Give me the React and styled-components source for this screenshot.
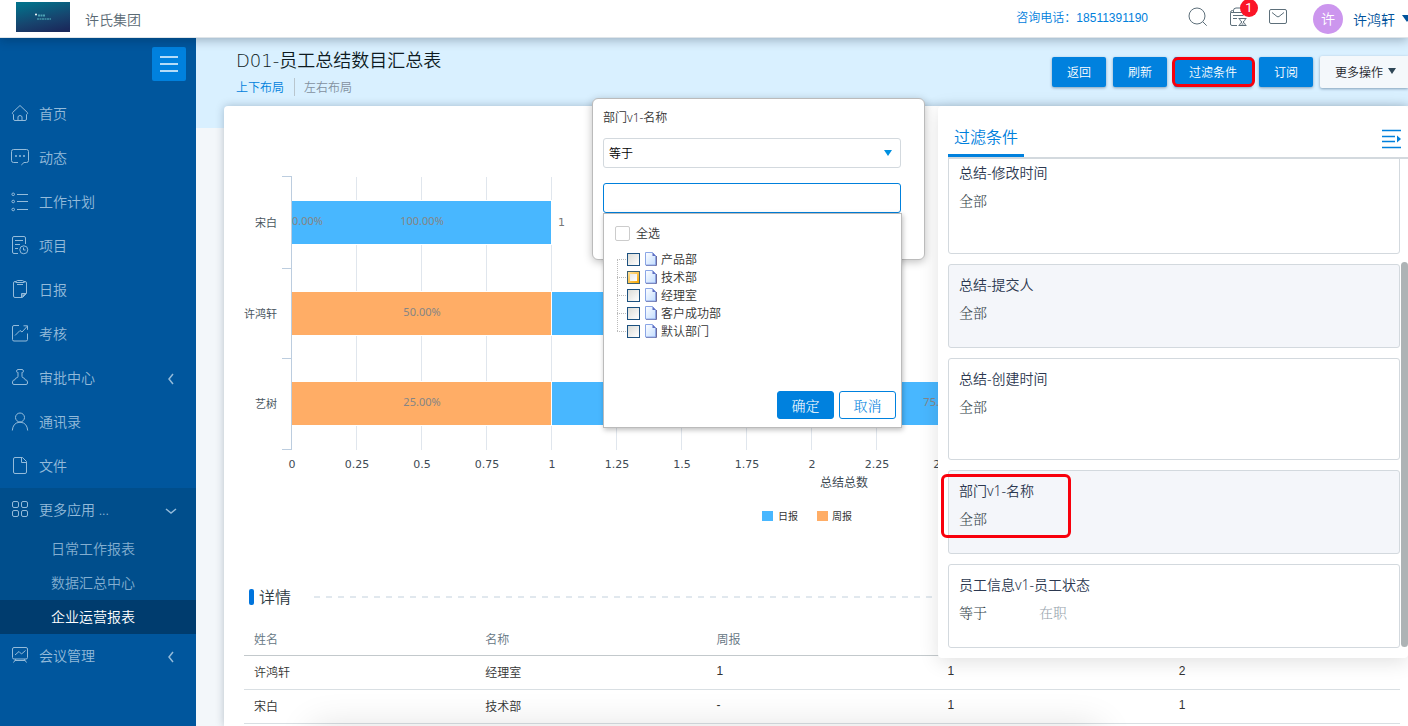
import React, { useState } from 'react';
import styled, { createGlobalStyle } from 'styled-components';

const GlobalStyle = createGlobalStyle`
  * {
    box-sizing: border-box;
  }
  body {
    margin: 0;
    overflow: hidden;
    font-family: "Noto Sans", "Noto Sans CJK SC", sans-serif;
    font-size: 12px;
    font-weight: 350;
    color: #333;
  }
  button, input, select {
    font-family: inherit;
    font-weight: inherit;
    margin: 0;
  }
  a {
    text-decoration: none;
    color: inherit;
  }
`;

const SERIF = '"Noto Serif CJK SC", "Liberation Serif", "Noto Sans CJK SC", serif';

const Shell = styled.div`
  display: flex;
  flex-direction: column;
  height: 100vh;
  overflow: hidden;
`;

/* ---------- top bar ---------- */

const TopBar = styled.header`
  position: relative;
  z-index: 5;
  flex: none;
  display: flex;
  align-items: center;
  height: 38px;
  padding-left: 16px;
  background: #fff;
  border-bottom: 1px solid #dfe5e9;
  box-shadow: 0 2px 10px rgba(0, 20, 40, 0.3);
`;

const Logo = styled.svg`
  width: 54px;
  height: 30px;
  margin-bottom: 4px;
`;

const Company = styled.span`
  margin-left: 15px;
  font-size: 14px;
  color: #5b6a74;
`;

const Tools = styled.div`
  display: flex;
  align-items: center;
  gap: 22px;
  margin-left: auto;
  padding-bottom: 4px;
  color: #5d6f7a;
`;

const Phone = styled.span`
  margin-right: 19px;
  font-family: "Liberation Sans", "Noto Sans CJK SC", sans-serif;
  font-size: 12px;
  color: #0080dc;
`;

const IconButton = styled.button`
  position: relative;
  display: flex;
  width: 18px;
  height: 18px;
  padding: 0;
  border: 0;
  background: none;
  color: inherit;
  cursor: pointer;

  svg {
    overflow: visible;
  }
`;

const Badge = styled.span`
  position: absolute;
  top: -9px;
  left: 11px;
  width: 18px;
  height: 18px;
  border-radius: 9px;
  background: #fb1528;
  color: #fff;
  font-family: Roboto, sans-serif;
  font-size: 13px;
  font-weight: 400;
  line-height: 17px;
  text-align: center;
`;

const User = styled.div`
  display: flex;
  align-items: center;
  margin-left: 26px;
  font-size: 14px;
  color: #00529b;

  svg {
    margin-left: 7px;
  }
`;

const Avatar = styled.span`
  width: 30px;
  height: 30px;
  margin-right: 10px;
  border-radius: 50%;
  background: #cc96ee;
  color: #fff;
  line-height: 30px;
  text-align: center;
`;

/* ---------- sidebar ---------- */

const Body = styled.div`
  flex: 1;
  display: flex;
  min-height: 0;
`;

const Sidebar = styled.nav`
  flex: none;
  width: 196px;
  background: #00569d;
  font-size: 14px;
  color: #94bbda;
`;

const ToggleRow = styled.div`
  display: flex;
  justify-content: flex-end;
  padding: 9px 10px 11px;
`;

const Toggle = styled.button`
  display: flex;
  align-items: center;
  justify-content: center;
  width: 34px;
  height: 34px;
  padding: 0;
  border: 0;
  border-radius: 2px;
  background: #0081de;
  color: #b4dcf8;
`;

const NavGroup = styled.div`
  background: ${({ $open }) => ($open ? '#004e8c' : 'transparent')};
`;

const NavItem = styled.a`
  display: flex;
  align-items: center;
  gap: 10px;
  height: 44px;
  padding: 0 19px 0 11px;

  span {
    padding-bottom: 2px;
  }
  svg {
    flex: none;
    overflow: visible;
  }
`;

const Chevron = styled.svg`
  width: 12px;
  height: 12px;
  margin: 2px 0 0 auto;
`;

const SubItem = styled.a`
  display: block;
  padding-left: 51px;
  line-height: 34px;
  color: ${({ $active }) => ($active ? '#fff' : '#83aed0')};
  background: ${({ $active }) => ($active ? '#003c6e' : 'transparent')};
`;

/* ---------- page ---------- */

const Page = styled.main`
  position: relative;
  flex: 1;
  display: flex;
  flex-direction: column;
  min-width: 0;
  background: linear-gradient(#d9f0ff 90px, #f3f7fa 90px);
`;

const PageHead = styled.div`
  flex: none;
  display: flex;
  justify-content: space-between;
  padding: 9px 0 7px 40px;
`;

const Title = styled.h1`
  margin: 0;
  font-family: "DejaVu Sans", "Noto Sans CJK SC", sans-serif;
  font-size: 18px;
  font-weight: 350;
  line-height: 28px;
  color: #0d1a22;
`;

const LayoutTabs = styled.div`
  display: flex;
  align-items: center;
  height: 24px;
`;

const LayoutTab = styled.a`
  color: ${({ $active }) => ($active ? '#0080dc' : '#8391a0')};

  & + & {
    margin-left: 10px;
    padding-left: 9px;
    border-left: 1px solid #b9c6ce;
  }
`;

const Actions = styled.div`
  display: flex;
  align-items: center;
  gap: 7px;
  height: 32px;
  margin-top: 9px;
`;

const ActionButton = styled.button`
  position: relative;
  height: 30px;
  padding: 0 15px;
  border: 0;
  border-radius: 2px;
  background: #0081de;
  box-shadow: 0 1px 3px rgba(0, 40, 80, 0.4);
  color: #fff;
  font-size: 12px;
`;

const MoreButton = styled(ActionButton)`
  display: flex;
  align-items: center;
  gap: 5px;
  width: 88px;
  height: 32px;
  border-radius: 2px 0 0 2px;
  background: #f4f8fb;
  color: #1c262c;
  white-space: nowrap;

  svg {
    flex: none;
    margin-bottom: 2px;
  }
`;

const Mark = styled.span`
  position: absolute;
  border: 3px solid #f8000c;
  border-radius: 6px;
  pointer-events: none;
`;

const ButtonMark = styled(Mark)`
  inset: 0 -3px 0 -2px;
`;

const CardMark = styled(Mark)`
  top: 3px;
  left: -8px;
  width: 130px;
  height: 64px;
`;

const Report = styled.section`
  position: relative;
  flex: 1;
  min-height: 0;
  margin-left: 28px;
  padding: 0 8px 0 20px;
  overflow: hidden;
  border-radius: 4px 0 0 0;
  background: #fff;
  box-shadow: 0 0 8px rgba(0, 30, 60, 0.25);

  &::after {
    content: "";
    position: absolute;
    right: 308px;
    bottom: -40px;
    left: 88px;
    height: 40px;
    box-shadow: 0 0 36px rgba(0, 0, 0, 0.12);
  }
`;

const ChartBox = styled.svg`
  display: block;
  width: 100%;
  height: 464px;
  font-weight: 400;
`;

const SectionHead = styled.div`
  display: flex;
  align-items: center;
  height: 54px;
  padding-left: 5px;
`;

const SectionTitle = styled.h2`
  display: flex;
  gap: 5px;
  margin: 0 23px 0 0;
  font-size: 16px;
  font-weight: 350;
  line-height: 16px;
  color: #2e3a42;

  &::before {
    content: "";
    width: 5px;
    border-radius: 2px;
    background: #0074dc;
  }
`;

const Dashes = styled.div`
  flex: 1;
  height: 2px;
  background: repeating-linear-gradient(90deg, #e1e8ee 0 6px, transparent 6px 12px);
`;

const Table = styled.table`
  width: 100%;
  table-layout: fixed;
  border-collapse: collapse;
  font-family: "Liberation Sans", "Noto Sans CJK SC", sans-serif;
  text-align: left;

  th, td {
    height: 34px;
    padding: 0 10px 2px;
    border-bottom: 1px solid #d9dfe3;
    font-weight: 350;
  }
  th {
    height: 31px;
    border-bottom-color: #c3c9cc;
    color: #63747f;
  }
`;

/* ---------- filter panel ---------- */

const Panel = styled.aside`
  position: absolute;
  top: 68px;
  right: 0;
  width: 470px;
  padding-bottom: 10px;
  border-radius: 4px;
  background: #fff;
  box-shadow: 0 4px 20px rgba(0, 0, 0, 0.12);
`;

const PanelHead = styled.div`
  display: flex;
  align-items: flex-end;
  justify-content: space-between;
  height: 53px;
  margin-left: 10px;
  padding-right: 7px;
  border-bottom: 2px solid #d3d9de;
  color: #0080dc;
`;

const PanelTitle = styled.h2`
  margin: 0;
  padding: 0 6px;
  border-bottom: 3px solid #0081de;
  font-size: 16px;
  font-weight: 350;
  line-height: 34px;
`;

const CollapseButton = styled.button`
  padding: 0;
  margin-bottom: 8px;
  border: 0;
  background: none;
  color: inherit;
  line-height: 0;
`;

// anchored to its end, as scrolled to the last condition
const FilterList = styled.div`
  position: relative;
  display: flex;
  flex-direction: column;
  justify-content: flex-end;
  gap: 10px;
  height: 489px;
  padding: 0 8px 0 10px;
  overflow: hidden;
`;

const ScrollThumb = styled.span`
  position: absolute;
  right: 0;
  bottom: 1px;
  width: 7px;
  height: 385px;
  border-radius: 4px;
  background: #adb3b5;
`;

const FilterCard = styled.div`
  position: relative;
  flex: none;
  height: ${({ $tall }) => ($tall ? '102px' : '84px')};
  padding: 10px;
  border: 1px solid #d3d9de;
  border-radius: 3px;
  background: ${({ $shaded }) => ($shaded ? '#f4f6fa' : '#fff')};
`;

const FilterName = styled.h3`
  margin: 0 0 7px;
  font-size: 14px;
  font-weight: 350;
  line-height: 20px;
  color: #2c3850;
`;

const FilterValue = styled.div`
  display: grid;
  grid-template-columns: 80px 1fr;
  font-family: ${SERIF};
  font-size: 14px;
  line-height: 20px;
  color: #333f48;

  em {
    font-style: normal;
    color: #97a4ad;
  }
`;

/* ---------- filter popup ---------- */

const Popup = styled.div`
  position: absolute;
  top: 60px;
  right: 483px;
  width: 333px;
  height: 162px;
  padding: 9px 23px 0 10px;
  border: 1px solid #bbb;
  border-radius: 6px;
  background: #fff;
  box-shadow: 0 2px 8px rgba(0, 0, 0, 0.25);
`;

const PopupTitle = styled.div`
  line-height: 20px;
  margin-bottom: 10px;
`;

const SelectBox = styled.div`
  position: relative;
  margin-bottom: 15px;

  svg {
    position: absolute;
    top: 12px;
    right: 9px;
    pointer-events: none;
  }
`;

const Select = styled.select`
  display: block;
  width: 100%;
  height: 30px;
  padding: 0 5px;
  border: 1px solid #d3d9de;
  border-radius: 3px;
  background: #fff;
  color: #000;
  font-size: 12px;
  appearance: none;
`;

const Field = styled.input`
  display: block;
  width: 100%;
  height: 30px;
  padding: 0 5px;
  border: 1px solid #0080dc;
  border-radius: 3px;
  font-size: 12px;
  outline: none;
`;

const DropDown = styled.div`
  display: flex;
  flex-direction: column;
  width: 299px;
  height: 215px;
  padding: 10px 5px 8px 11px;
  border: 1px solid #bbb;
  background: #fff;
  box-shadow: 1px 2px 5px rgba(0, 0, 0, 0.25);
`;

const AllLabel = styled.label`
  display: flex;
  align-items: center;
  gap: 6px;
  height: 18px;

  input {
    width: 15px;
    height: 15px;
    border: 1px solid #ccc;
    border-radius: 2px;
    appearance: none;
  }
`;

const Tree = styled.ul`
  margin: 8px 0 0 2px;
  padding: 0;
  list-style: none;
`;

const Node = styled.li`
  height: 18px;
  background:
    linear-gradient(90deg, #bbb 1px, transparent 1px) 0 9px / 2px 1px repeat-x,
    linear-gradient(#bbb 1px, transparent 1px) 0 0 / 1px 2px repeat-y;

  &:first-child {
    background:
      linear-gradient(90deg, #bbb 1px, transparent 1px) 0 9px / 2px 1px repeat-x,
      linear-gradient(#fff, #fff) 0 0 / 1px 9px no-repeat,
      linear-gradient(#bbb 1px, transparent 1px) 0 0 / 1px 2px repeat-y;
  }
  &:last-child {
    background:
      linear-gradient(90deg, #bbb 1px, transparent 1px) 0 9px / 2px 1px repeat-x,
      linear-gradient(#fff, #fff) 0 10px / 1px 9px no-repeat,
      linear-gradient(#bbb 1px, transparent 1px) 0 0 / 1px 2px repeat-y;
  }

  label {
    display: flex;
    align-items: center;
    height: 18px;
    margin-left: 10px;
    background: #fff;
    line-height: 16px;
  }
  span {
    padding-top: 2px;
  }
  svg {
    margin: 0 4px 0 5px;
  }
`;

const NodeCheck = styled.input`
  width: 13px;
  height: 13px;
  border: 1px solid ${({ $hot }) => ($hot ? '#3d5f70' : '#1c5180')};
  appearance: none;
  background: ${({ $hot }) =>
    $hot
      ? 'linear-gradient(135deg, #e8e8e6, #fff) 2px 2px / 7px 7px no-repeat, linear-gradient(135deg, #ffe3a0, #f9a600)'
      : 'linear-gradient(135deg, #dcdcd7, #fff)'};
`;

const Buttons = styled.div`
  display: flex;
  justify-content: flex-end;
  gap: 5px;
  margin-top: auto;
`;

const PopupButton = styled.button`
  width: 57px;
  height: 28px;
  padding: 0;
  border: 1px solid #0081de;
  border-radius: 3px;
  background: ${({ $primary }) => ($primary ? '#0081de' : '#fff')};
  color: ${({ $primary }) => ($primary ? '#fff' : '#0081de')};
  font-family: ${SERIF};
  font-size: 14px;
`;

/* ---------- drawings ---------- */

const iconPaths = {
  home: (
    <path d="M9 .5 1.6 7.5q-1 1 .9 2v4.5q0 1.500 1.500 1.500h10q1.500 0 1.500-1.500V9.500q1.900-1 .9-2zM7 15.500v-4q2-2.200 4 0v4" />
  ),
  chat: (
    <>
      <path d="M7 13.5H2.5q-2 0-2-2v-9q0-2 2-2h13q2 0 2 2v9q0 2-2 2H13L10.3 16" />
      <path d="M4 7h2M8 7h2M12 7h2" strokeWidth="1.6" />
    </>
  ),
  list: (
    <>
      <circle cx="2.2" cy="1.3" r="1.3" />
      <circle cx="2.2" cy="8.5" r="1.3" />
      <circle cx="2.2" cy="16.5" r="1.3" />
      <path d="M6 1.5h11M6 8.5h11M6 16.5h11" />
    </>
  ),
  project: (
    <>
      <path d="M7 16.5H3Q1.5 16.5 1.5 15V1Q1.5-.5 3-.5h10q1.5 0 1.5 1.5v6M4 3.5h8M4 7.5h5M4 11.5h3" />
      <circle cx="12.8" cy="12.8" r="4" />
      <path d="M12.5 10.5V13h2" />
    </>
  ),
  daily: (
    <>
      <path d="M5 .5H4Q2.5.5 2.5 2v13q0 1.5 1.5 1.5h7.5l4-4V2q0-1.5-1.5-1.5h-1M5.500 1.500v-1Q5.500-.5 6.500-.5h5q1 0 1 1v1M4.5 1.500h9M6 3.500h6" />
      <path d="M10.500 16v-3.500H15z" fill="currentColor" fillOpacity=".5" />
    </>
  ),
  assess: (
    <path d="M8 .5H3Q1.5.5 1.5 2v12.5Q1.5 16 3 16h12q1.5 0 1.5-1.5v-6M4 10.500l5-5 2 1.500 5.500-6M12.500.8h4v4" />
  ),
  stamp: (
    <path d="M5.500 2.500Q5.500.5 7 .5h4q1.500 0 1.500 2 0 .8-1 .8h-.5v4q0 1.200 1 1.400 2 .3 2 2 2.500.2 2.500 2.300v1q0 1.500-1.500 1.500H3Q1.500 15.500 1.500 14v-1q0-2.100 2.500-2.300 0-1.700 2-2 1-.2 1-1.400v-4h-.5q-1 0-1-.8z" />
  ),
  person: (
    <>
      <circle cx="9" cy="4.500" r="4.500" />
      <path d="M1.300 17.500Q2 10 8 9.300h2q6 .7 6.700 8.200" />
    </>
  ),
  file: (
    <path d="M11.500.5H4Q2.500.5 2.500 2v13q0 1.500 1.500 1.500h10q1.500 0 1.500-1.500V4.500zM10.500 1v4.500H15" />
  ),
  grid: (
    <>
      <rect x="1.500" y=".5" width="6" height="6" rx="1.500" />
      <rect x="10.500" y=".5" width="6" height="6" rx="1.500" />
      <rect x="1.500" y="9.500" width="6" height="6" rx="1.500" />
      <rect x="10.500" y="9.500" width="6" height="6" rx="1.500" />
    </>
  ),
  board: (
    <path d="M3 .5h12q1.500 0 1.500 1.500v8.500q0 1.500-1.500 1.500H3q-1.500 0-1.500-1.500V2Q1.500.5 3 .5zM4 8l4-3.500 2.500 2.500L14.500 3.500M5 12l-2.500 3.500M13 12l2.500 3.500M4 13.500h10" />
  ),
  search: (
    <>
      <circle cx="8" cy="8" r="8" />
      <path d="m13.700 13.700 4 4" />
    </>
  ),
  tasks: (
    <path d="M4.500 4V2.500Q4.500 0 7 0h7Q16.500 0 16.500 2M4.500 2.500H3.500Q1.500 2.500 1.500 4.500V16q0 1.500 1.500 1.500h5M2 4.500h12.500q2 0 2 2v1.500M4 7.500h10.500M4 10.500h4M9.500 10.500h8M9.500 17.500h8M10.500 10.500q0 2 2.500 3.500-2.500 1.500-2.500 3.500M16.500 10.500q0 2-2.500 3.500 2.500 1.500 2.500 3.500M12.500 16h2" />
  ),
  mail: (
    <path d="M2 1.500h14q1.500 0 1.500 1.500v11q0 1.500-1.500 1.500H2Q.5 15.500.5 14V3Q.5 1.500 2 1.500zM3 4.500l5 4q1 .7 2 0l5-4" />
  ),
  burger: <path d="M0 2h18M0 9h18M0 16h18" strokeWidth="2" />,
};

const Icon = ({ name }) => (
  <svg width="18" height="18" viewBox="0 0 18 18" fill="none" stroke="currentColor" strokeLinejoin="round">
    {iconPaths[name]}
  </svg>
);

const nav = [
  { icon: 'home', label: '首页' },
  { icon: 'chat', label: '动态' },
  { icon: 'list', label: '工作计划' },
  { icon: 'project', label: '项目' },
  { icon: 'daily', label: '日报' },
  { icon: 'assess', label: '考核' },
  { icon: 'stamp', label: '审批中心', more: true },
  { icon: 'person', label: '通讯录' },
  { icon: 'file', label: '文件' },
  {
    icon: 'grid',
    label: '更多应用 ...',
    more: true,
    items: ['日常工作报表', '数据汇总中心', '企业运营报表'],
  },
  { icon: 'board', label: '会议管理', more: true },
];

const BLUE = '#48b7ff';
const ORANGE = '#ffad66';

const people = [
  { name: '宋白', parts: [{ value: 1, color: BLUE, text: '100.00%' }], zero: '0.00%', total: 1 },
  {
    name: '许鸿轩',
    parts: [
      { value: 1, color: ORANGE, text: '50.00%' },
      { value: 1, color: BLUE },
    ],
  },
  {
    name: '艺树',
    parts: [
      { value: 1, color: ORANGE, text: '25.00%' },
      { value: 3, color: BLUE, text: '75.00%' },
    ],
  },
];

const filters = [
  { name: '总结-修改时间', value: '全部', tall: true },
  { name: '总结-提交人', value: '全部', shaded: true },
  { name: '总结-创建时间', value: '全部', tall: true },
  { name: '部门v1-名称', value: '全部', shaded: true, marked: true },
  { name: '员工信息v1-员工状态', value: '等于', extra: '在职' },
];

const rows = [
  ['许鸿轩', '经理室', '1', '1', '2'],
  ['宋白', '技术部', '-', '1', '1'],
];

const departments = ['产品部', '技术部', '经理室', '客户成功部', '默认部门'];

const Chart = () => {
  const left = 48;
  const top = 71;
  const unit = 260;
  const band = 90.6;
  const ticks = Array.from({ length: 11 }, (_, i) => i / 4);

  return (
    <ChartBox role="img" aria-label="总结总数" fontFamily='"DejaVu Sans", "Noto Sans CJK SC", sans-serif'>
      {ticks.map((t) => (
        <g key={t}>
          {t > 0 && <path d={`M${Math.round(left + t * unit) - 0.5} ${top}v273`} stroke="#e0e6ed" />}
          <text x={left + t * unit} y="362" textAnchor="middle" fontSize="11" fill="#3e4a54">{t}</text>
        </g>
      ))}
      <path
        d="M38 70.5h9.500M38 162.500h9.500M38 252.500h9.500M38 343.500h9.500M47.500 70v274"
        stroke="#bccddf"
        fill="none"
      />
      {people.map((p, row) => {
        const y = top + Math.round(row * band) + 24;
        let x = left;
        return (
          <g key={p.name}>
            <text x="33" y={y + 26} textAnchor="end" fontSize="11" fill="#4a5660">{p.name}</text>
            {p.parts.map((part, i) => {
              const w = part.value * unit;
              const start = x;
              x += w;
              return (
                <g key={i}>
                  <rect x={start} y={y - 1} width={w} height="45" fill="#fff" />
                  <rect x={start} y={y} width={w - 1} height="43" fill={part.color} />
                  {part.text && (
                    <text
                      x={start + w / 2}
                      y={y + 24}
                      textAnchor="middle"
                      fontSize="11"
                      fill="#858585"
                      fontFamily='"Noto Sans", sans-serif'
                    >
                      {part.text}
                    </text>
                  )}
                </g>
              );
            })}
            {p.zero && (
              <text x={left} y={y + 24} fontSize="11" fill="#858585" fontFamily='"Noto Sans", sans-serif'>
                {p.zero}
              </text>
            )}
            {p.total && <text x={x + 6} y={y + 25} fontSize="11" fill="#777">{p.total}</text>}
          </g>
        );
      })}
      <text x="600" y="381" textAnchor="middle" fontSize="12" fill="#3e4a54">总结总数</text>
      <g fontSize="10" fill="#333">
        <rect x="518" y="405" width="11" height="10" fill={BLUE} />
        <text x="534" y="414">日报</text>
        <rect x="573" y="405" width="11" height="10" fill={ORANGE} />
        <text x="588" y="414">周报</text>
      </g>
    </ChartBox>
  );
};

const DocIcon = () => (
  <svg width="12" height="14" viewBox="0 0 12 14">
    <defs>
      <linearGradient id="sheet" x1="0" y1="0" x2="1" y2="1">
        <stop offset="0" stopColor="#fff" />
        <stop offset="1" stopColor="#c3ddff" />
      </linearGradient>
    </defs>
    <path d="M1 13.500h10.500V4" stroke="#6b6b9c" fill="none" />
    <path d="M.5.5H7.500L10.500 4v9H.5z" fill="url(#sheet)" stroke="#8ba6e6" />
    <path d="M7.500.5V4H11z" fill="#5f6fc4" />
  </svg>
);

const Caret = ({ color = '#0090e0' }) => (
  <svg width="8" height="6" viewBox="0 0 8 6" aria-hidden="true">
    <path d="M0 0h8L4 6z" fill={color} />
  </svg>
);

const FilterPopup = () => {
  const [keyword, setKeyword] = useState('');

  return (
    <Popup>
      <PopupTitle>部门v1-名称</PopupTitle>
      <SelectBox>
        <Select aria-label="条件" defaultValue="等于">
          <option>等于</option>
        </Select>
        <Caret />
      </SelectBox>
      <Field aria-label="部门" value={keyword} onChange={(e) => setKeyword(e.target.value)} />
      <DropDown>
        <AllLabel>
          <input type="checkbox" />
          全选
        </AllLabel>
        <Tree>
          {departments.map((name, i) => (
            <Node key={name}>
              <label>
                <NodeCheck type="checkbox" $hot={i === 1} />
                <DocIcon />
                <span>{name}</span>
              </label>
            </Node>
          ))}
        </Tree>
        <Buttons>
          <PopupButton $primary>确定</PopupButton>
          <PopupButton>取消</PopupButton>
        </Buttons>
      </DropDown>
    </Popup>
  );
};

const FilterPanel = () => (
  <Panel>
    <PanelHead>
      <PanelTitle>过滤条件</PanelTitle>
      <CollapseButton aria-label="收起">
        <svg width="19" height="20" viewBox="0 0 19 20" fill="none" stroke="currentColor" strokeWidth="1.500">
          <path d="M0 1.500h19M0 7.500h13M0 12.500h13M0 18.500h19" />
          <path d="M15 6.500v7l4-3.500z" fill="currentColor" stroke="none" />
        </svg>
      </CollapseButton>
    </PanelHead>
    <FilterList>
      {filters.map((f) => (
        <FilterCard key={f.name} $tall={f.tall} $shaded={f.shaded}>
          <FilterName>{f.name}</FilterName>
          <FilterValue>
            <span>{f.value}</span>
            {f.extra && <em>{f.extra}</em>}
          </FilterValue>
          {f.marked && <CardMark />}
        </FilterCard>
      ))}
      <ScrollThumb />
    </FilterList>
  </Panel>
);

export default function App() {
  return (
    <Shell>
      <GlobalStyle />
      <TopBar>
        <Logo viewBox="0 0 54 30">
          <defs>
            <linearGradient id="logo" x1="0.300" y1="0" x2="0.700" y2="1">
              <stop offset="0" stopColor="#03708a" />
              <stop offset="0.600" stopColor="#17446e" />
              <stop offset="1" stopColor="#1a2a5c" />
            </linearGradient>
          </defs>
          <rect width="54" height="30" fill="url(#logo)" />
          <circle cx="20" cy="12.500" r="1" fill="#fff" />
          <path d="M22 13.500h7" stroke="#5cb8c4" strokeWidth="2" strokeDasharray="2 .5" opacity=".8" />
          <path d="M21 17h14" stroke="#3f8fa4" strokeWidth="2" strokeDasharray="2 .5" opacity=".8" />
        </Logo>
        <Company>许氏集团</Company>
        <Tools>
          <Phone>咨询电话：18511391190</Phone>
          <IconButton aria-label="搜索"><Icon name="search" /></IconButton>
          <IconButton aria-label="任务">
            <Icon name="tasks" />
            <Badge>1</Badge>
          </IconButton>
          <IconButton aria-label="邮件"><Icon name="mail" /></IconButton>
        </Tools>
        <User>
          <Avatar>许</Avatar>
          许鸿轩
          <svg width="6" height="7" viewBox="0 0 6 7">
            <path d="M0 0h10L5 7z" fill="currentColor" />
          </svg>
        </User>
      </TopBar>
      <Body>
        <Sidebar>
          <ToggleRow>
            <Toggle aria-label="菜单"><Icon name="burger" /></Toggle>
          </ToggleRow>
          {nav.map((item) => (
            <NavGroup key={item.label} $open={!!item.items}>
              <NavItem href="#">
                <Icon name={item.icon} />
                <span>{item.label}</span>
                {item.more && (
                  <Chevron viewBox="0 0 12 12" fill="none" stroke="currentColor" strokeWidth="1.500">
                    <path d={item.items ? 'M1 4l5 4 5-4' : 'M8 1 4 6l4 5'} />
                  </Chevron>
                )}
              </NavItem>
              {item.items?.map((label, i) => (
                <SubItem href="#" key={label} $active={i === 2}>{label}</SubItem>
              ))}
            </NavGroup>
          ))}
        </Sidebar>
        <Page>
          <PageHead>
            <div>
              <Title>D01-员工总结数目汇总表</Title>
              <LayoutTabs>
                <LayoutTab href="#" $active>上下布局</LayoutTab>
                <LayoutTab href="#">左右布局</LayoutTab>
              </LayoutTabs>
            </div>
            <Actions>
              <ActionButton>返回</ActionButton>
              <ActionButton>刷新</ActionButton>
              <ActionButton>
                过滤条件
                <ButtonMark />
              </ActionButton>
              <ActionButton>订阅</ActionButton>
              <MoreButton>
                更多操作
                <Caret color="#2e4656" />
              </MoreButton>
            </Actions>
          </PageHead>
          <Report>
            <Chart />
            <SectionHead>
              <SectionTitle>详情</SectionTitle>
              <Dashes />
            </SectionHead>
            <Table>
              <thead>
                <tr>
                  {['姓名', '名称', '周报', '日报', '合计'].map((h) => <th key={h}>{h}</th>)}
                </tr>
              </thead>
              <tbody>
                {rows.map((row) => (
                  <tr key={row[0]}>
                    {row.map((cell, i) => <td key={i}>{cell}</td>)}
                  </tr>
                ))}
              </tbody>
            </Table>
          </Report>
          <FilterPanel />
          <FilterPopup />
        </Page>
      </Body>
    </Shell>
  );
}
